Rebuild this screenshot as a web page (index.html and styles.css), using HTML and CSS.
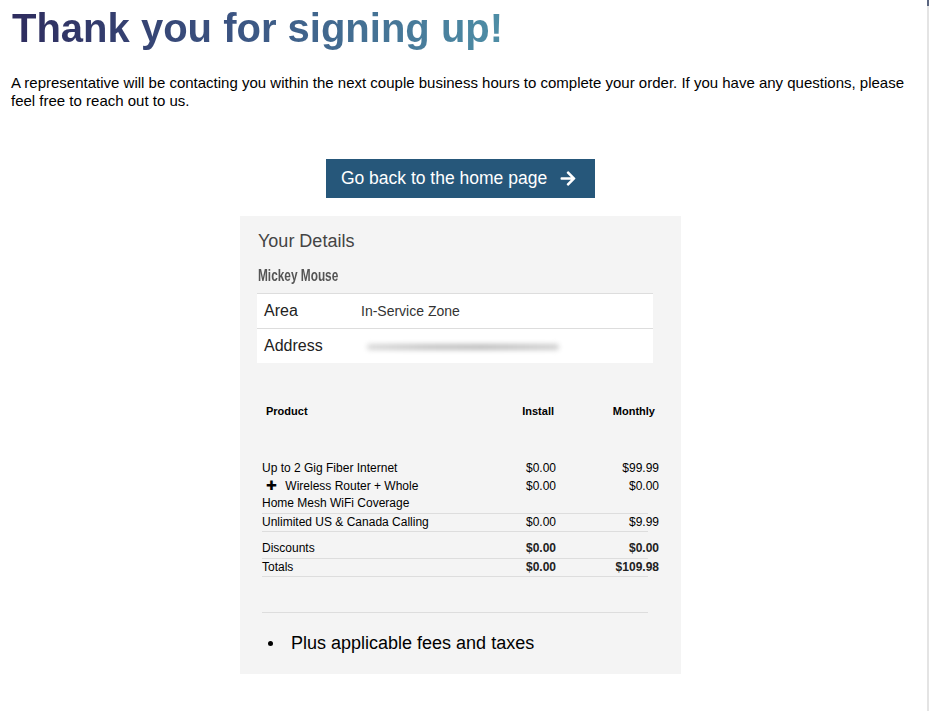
FILE: index.html
```
<!DOCTYPE html>
<html lang="en">
<head>
<meta charset="utf-8">
<title>Thank you for signing up!</title>
<link rel="stylesheet" href="styles.css">
</head>
<body>
<div class="edge"></div>
<main class="page">
  <h1 class="title"><span class="grad">Thank you for signing up!</span></h1>
  <p class="intro">A representative will be contacting you within the next couple business hours to complete your order. If you have any questions, please feel free to reach out to us.</p>
  <div class="cta-wrap">
    <a class="cta" href="#">Go back to the home page
      <svg class="arrow" viewBox="0 0 448 512" width="16" height="17" aria-hidden="true"><path fill="#fff" d="M190.5 66.9l22.2-22.2c9.4-9.4 24.6-9.4 33.9 0L441 239c9.4 9.4 9.4 24.6 0 33.9L246.6 467.3c-9.4 9.4-24.6 9.4-33.9 0l-22.2-22.2c-9.5-9.5-9.3-25 .4-34.3L311.4 296H24c-13.3 0-24-10.7-24-24v-32c0-13.3 10.7-24 24-24h287.4L190.9 101.2c-9.8-9.3-10-24.8-.4-34.3z"/></svg>
    </a>
  </div>
  <section class="card">
    <h2 class="card-title">Your Details</h2>
    <div class="name"><span class="name-text">Mickey Mouse</span></div>
    <div class="details">
      <div class="drow"><span class="dlabel">Area</span><span class="dval">In-Service Zone</span></div>
      <div class="drow"><span class="dlabel">Address</span><span class="dval"><span class="blurred"></span></span></div>
    </div>
    <div class="products">
      <div class="phead">
        <span class="pc-name">Product</span>
        <span class="pc-inst">Install</span>
        <span class="pc-mon">Monthly</span>
      </div>
      <div class="pgroup">
        <div class="pline"><span class="pc-name">Up to 2 Gig Fiber Internet</span><span class="pc-inst">$0.00</span><span class="pc-mon">$99.99</span></div>
        <div class="pline"><span class="pc-name"><span class="plus">&#10010;</span> Wireless Router + Whole</span><span class="pc-inst">$0.00</span><span class="pc-mon">$0.00</span></div>
        <div class="pline"><span class="pc-name">Home Mesh WiFi Coverage</span><span class="pc-inst"></span><span class="pc-mon"></span></div>
      </div>
      <div class="pgroup">
        <div class="pline"><span class="pc-name">Unlimited US &amp; Canada Calling</span><span class="pc-inst">$0.00</span><span class="pc-mon">$9.99</span></div>
      </div>
      <div class="pgroup sum first">
        <div class="pline"><span class="pc-name">Discounts</span><span class="pc-inst">$0.00</span><span class="pc-mon">$0.00</span></div>
      </div>
      <div class="pgroup sum">
        <div class="pline"><span class="pc-name">Totals</span><span class="pc-inst">$0.00</span><span class="pc-mon">$109.98</span></div>
      </div>
    </div>
    <hr class="sep">
    <ul class="notes">
      <li>Plus applicable fees and taxes</li>
    </ul>
  </section>
</main>
</body>
</html>
```
FILE: styles.css
```
html, body {
  margin: 0;
  padding: 0;
  background: #fff;
}
body {
  font-family: "Liberation Sans", Arial, sans-serif;
  color: #000;
}
.edge {
  position: fixed;
  top: 0;
  right: 1px;
  width: 2px;
  height: 100%;
  background: #e4e4e4;
  border-top: 6px solid #5b6680;
}
.page {
  width: 905px;
  padding: 0 8px;
}
.title {
  margin: 0;
  padding: 5px 0 0 4px;
  font-size: 40px;
  line-height: 46px;
  font-weight: bold;
}
.grad {
  display: inline-block;
  background: linear-gradient(90deg, #2e2c5e 0%, #3b5482 45%, #4e8ea6 100%);
  -webkit-background-clip: text;
  background-clip: text;
  color: transparent;
}
.intro {
  margin: 23px 0 0 3px;
  font-size: 15px;
  line-height: 18px;
}
.cta-wrap {
  display: flex;
  justify-content: center;
  margin-top: 49px;
}
.cta {
  display: flex;
  align-items: center;
  justify-content: center;
  gap: 13px;
  width: 269px;
  height: 39px;
  box-sizing: border-box;
  padding-right: 4px;
  background: #26577a;
  color: #fff;
  font-size: 17.5px;
  text-decoration: none;
}
.arrow {
  display: block;
}
.card {
  width: 441px;
  box-sizing: border-box;
  margin: 18px auto 0;
  background: #f4f4f4;
  padding: 14px 28px 20px 17px;
}
.card-title {
  margin: 0 0 0 1px;
  font-size: 18px;
  line-height: 22px;
  font-weight: normal;
  color: #444;
}
.name {
  margin: 15px 0 0 1px;
  height: 18px;
  line-height: 18px;
}
.name-text {
  display: inline-block;
  font-family: "Liberation Sans", sans-serif;
  font-weight: bold;
  font-size: 16px;
  color: #555;
  transform: scaleX(0.74);
  transform-origin: left center;
}
.details {
  margin-top: 8px;
  background: #fff;
}
.drow {
  display: flex;
  align-items: center;
  height: 34px;
  border-top: 1px solid #ddd;
  padding-left: 7px;
}
.dlabel {
  width: 97px;
  font-size: 16px;
  color: #222;
}
.dval {
  font-size: 14px;
  color: #333;
}
.blurred {
  display: block;
  width: 192px;
  height: 6px;
  margin-left: 6px;
  margin-top: 2px;
  background: linear-gradient(90deg, #d8d8d8, #c4c4c4 30%, #bcbcbc 60%, #cfcfcf);
  border-radius: 3px;
  filter: blur(2.5px);
}
.products {
  margin: 40px 0 0 5px;
  width: 386px;
  font-size: 12px;
}
.phead {
  display: flex;
  font-size: 11px;
  font-weight: bold;
  line-height: 17px;
  padding-left: 4px;
  margin-right: -11px;
  margin-bottom: 40px;
}
.phead span { flex: none; }
.phead .pc-name { width: 250px; }
.phead .pc-inst { width: 38px; text-align: right; }
.phead .pc-mon { width: 101px; text-align: right; }
.pgroup {
  border-bottom: 1px solid #ddd;
}
.pgroup.first {
  margin-top: 8px;
}
.pline {
  display: flex;
  height: 17.5px;
  line-height: 17.5px;
  margin-right: -11px;
}
.pline span { flex: none; }
.pline .pc-name { width: 254px; }
.pline .pc-inst { width: 40px; text-align: right; }
.pline .pc-mon { width: 103px; text-align: right; }
.sum .pc-inst, .sum .pc-mon {
  font-weight: bold;
  color: #222;
}
.plus {
  display: inline-block;
  font-size: 13px;
  line-height: 12px;
  width: 18px;
  text-align: center;
  margin-right: 2px;
  vertical-align: 0;
}
.sep {
  margin: 35px 0 0 5px;
  width: 386px;
  border: 0;
  border-top: 1px solid #ddd;
}
.notes {
  margin: 19px 0 0 0;
  padding-left: 34px;
  font-size: 18px;
  line-height: 22px;
  list-style: none;
}
.notes li {
  position: relative;
}
.notes li::before {
  content: "";
  position: absolute;
  left: -23px;
  top: 9px;
  width: 5px;
  height: 5px;
  border-radius: 50%;
  background: #000;
}
```
